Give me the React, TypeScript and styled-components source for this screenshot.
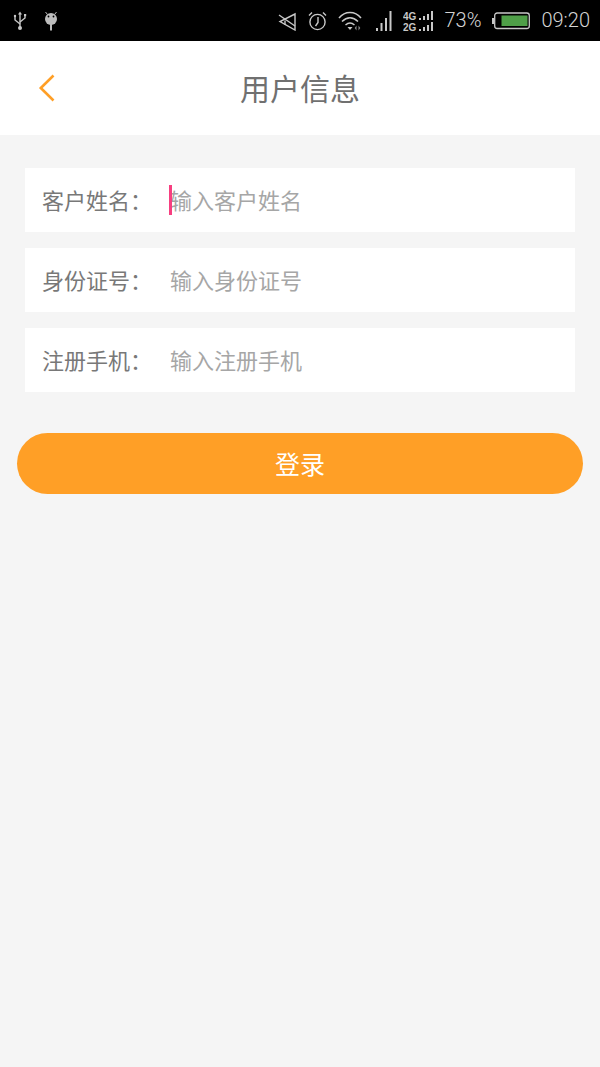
import React from "react";
import styled, { createGlobalStyle } from "styled-components";

const Global = createGlobalStyle`
  html, body { margin: 0; padding: 0; background: #f5f5f5; }
  * { box-sizing: border-box; }
`;

const Page = styled.div`
  width: 600px;
  height: 1067px;
  overflow: hidden;
  background: #f5f5f5;
  font-family: "Noto Sans CJK SC", "Noto Sans", sans-serif;
  display: flex;
  flex-direction: column;
`;

const StatusBar = styled.div`
  height: 41px;
  background: #000;
  display: flex;
  align-items: center;
  justify-content: space-between;
  padding: 0 10px 0 12px;
  color: #c8c8c8;
`;

const StatusGroup = styled.div<{ $gap: number }>`
  display: flex;
  align-items: center;
  gap: ${(p) => p.$gap}px;
`;

const StatusText = styled.span`
  font-family: Roboto, "Open Sans", sans-serif;
  font-weight: 300;
  font-size: 20px;
  line-height: 41px;
  color: #d4d4d4;
`;

const Header = styled.header`
  height: 94px;
  background: #fff;
  display: flex;
  align-items: center;
  justify-content: center;
  position: relative;
  padding-bottom: 2px;
`;

const BackButton = styled.button`
  position: absolute;
  left: 38px;
  top: 33px;
  width: 18px;
  height: 28px;
  padding: 0;
  border: 0;
  background: none;
  display: block;
`;

const Title = styled.h1`
  margin: 0;
  font-size: 30px;
  line-height: 40px;
  font-weight: 400;
  color: #707070;
`;

const Form = styled.form`
  display: flex;
  flex-direction: column;
  gap: 16px;
  padding: 33px 25px 0;
`;

const Row = styled.label`
  height: 64px;
  background: #fff;
  display: flex;
  align-items: center;
  padding: 0 0 2px 17px;
  position: relative;
`;

const Label = styled.span`
  width: 128px;
  flex: none;
  font-size: 22px;
  color: #787878;
  white-space: nowrap;
`;

const Placeholder = styled.span`
  font-size: 22px;
  color: #a6a6a6;
  white-space: nowrap;
`;

const Caret = styled.i`
  position: absolute;
  left: 144px;
  top: 17px;
  width: 3px;
  height: 30px;
  background: #f73f80;
`;

const Submit = styled.button`
  display: block;
  margin: 41px 17px 0;
  width: 566px;
  height: 61px;
  border: 0;
  border-radius: 30.5px;
  background: #ff9f26;
  color: #fff;
  font-family: inherit;
  font-size: 25px;
  line-height: 61px;
  padding: 0;
`;

const UsbIcon = () => (
  <svg width="16" height="20" viewBox="0 0 16 20" fill="none" stroke="#c8c8c8" strokeWidth="1.4">
    <path d="M8 3v13" />
    <path d="M8 0.5 6 3.5h4z" fill="#c8c8c8" stroke="none" />
    <circle cx="8" cy="17" r="2" fill="#c8c8c8" stroke="none" />
    <path d="M3 5v4l5 4M13 4v3l-5 4" />
    <circle cx="3" cy="5" r="1.2" fill="#c8c8c8" stroke="none" />
    <rect x="12" y="3" width="2.2" height="2.2" fill="#c8c8c8" stroke="none" />
  </svg>
);

const BugIcon = () => (
  <svg width="14" height="20" viewBox="0 0 14 20" fill="#bdbdbd">
    <path d="M1.5 1 3.5 3.5M12.5 1 10.5 3.5" stroke="#bdbdbd" strokeWidth="1" />
    <circle cx="7" cy="8" r="6" />
    <rect x="6" y="13" width="2" height="6.5" />
    <circle cx="4.5" cy="5.5" r="0.9" fill="#000" />
    <circle cx="9.5" cy="5.5" r="0.9" fill="#000" />
  </svg>
);

const MuteIcon = () => (
  <svg width="19" height="20" viewBox="0 0 19 20" fill="none" stroke="#c8c8c8" strokeWidth="1.4">
    <path d="M17 3 2 10.5 17 19z" />
    <path d="M7 9.5v4.5" />
    <path d="M1 4 17 15" />
  </svg>
);

const AlarmIcon = () => (
  <svg width="19" height="20" viewBox="0 0 19 20" fill="none" stroke="#c8c8c8" strokeWidth="1.4">
    <circle cx="9.5" cy="11" r="7.6" />
    <path d="M10 6v5.5L7.5 15" />
    <path d="M1 4.5 4 1.5M18 4.5 15 1.5" />
  </svg>
);

const WifiIcon = () => (
  <svg width="27" height="20" viewBox="0 0 27 20" fill="none" stroke="#c8c8c8" strokeWidth="1.5">
    <path d="M1 7C7-.5 17-.5 23 7" />
    <path d="M4 10.5c5-5 11-5 16 0" />
    <path d="M7.5 14c3-2.6 6-2.6 9 0" />
    <path d="M9.5 16h5l-2.5 3z" fill="#c8c8c8" stroke="none" />
    <path d="M18.5 14.5v5l-1.8-2.5zM20.5 14.5v5l1.8-2.5z" fill="#8a8a8a" stroke="none" />
  </svg>
);

const SignalIcon = () => (
  <svg width="16" height="20" viewBox="0 0 16 20" fill="#c8c8c8">
    <rect x="0" y="17" width="2" height="3" />
    <rect x="4.5" y="12" width="2" height="8" />
    <rect x="9" y="7" width="2" height="13" />
    <rect x="13.5" y="0" width="2" height="20" />
  </svg>
);

const NetIcon = () => (
  <svg width="30" height="22" viewBox="0 0 30 22" fill="#c8c8c8">
    <text x="0" y="9.5" fontFamily="Liberation Sans" fontWeight="700" fontSize="10">4G</text>
    <text x="0" y="20.5" fontFamily="Liberation Sans" fontWeight="700" fontSize="10">2G</text>
    <rect x="16" y="8" width="2" height="2" />
    <rect x="20" y="6" width="2" height="4" />
    <rect x="24" y="4" width="2" height="6" />
    <rect x="28" y="1" width="2" height="9" />
    <rect x="16" y="19" width="2" height="2" />
    <rect x="20" y="17" width="2" height="4" />
    <rect x="24" y="15" width="2" height="6" />
    <rect x="28" y="12" width="2" height="9" />
  </svg>
);

const BatteryIcon = () => (
  <svg width="38" height="18" viewBox="0 0 38 18" fill="none">
    <rect x="0" y="6" width="2" height="6" fill="#c8c8c8" />
    <rect x="2.7" y="1" width="34.6" height="15.5" rx="2.5" stroke="#c8c8c8" strokeWidth="1.3" />
    <rect x="9.5" y="3.5" width="26" height="10.5" fill="#4f9f48" />
  </svg>
);

const BackIcon = () => (
  <svg width="18" height="28" viewBox="0 0 18 28" fill="none" stroke="#ff9f26" strokeWidth="2.6">
    <path d="M15.5 1.5 2.8 14l12.7 12.5" />
  </svg>
);

const fields = [
  { label: "客户姓名：", placeholder: "输入客户姓名", focused: true },
  { label: "身份证号：", placeholder: "输入身份证号", focused: false },
  { label: "注册手机：", placeholder: "输入注册手机", focused: false },
];

export default function App() {
  return (
    <Page>
      <Global />
      <StatusBar>
        <StatusGroup $gap={16}>
          <UsbIcon />
          <BugIcon />
        </StatusGroup>
        <StatusGroup $gap={11}>
          <MuteIcon />
          <AlarmIcon />
          <WifiIcon />
          <SignalIcon />
          <NetIcon />
          <StatusText>73%</StatusText>
          <BatteryIcon />
          <StatusText>09:20</StatusText>
        </StatusGroup>
      </StatusBar>
      <Header>
        <BackButton type="button">
          <BackIcon />
        </BackButton>
        <Title>用户信息</Title>
      </Header>
      <Form>
        {fields.map((f) => (
          <Row key={f.label}>
            <Label>{f.label}</Label>
            <Placeholder>{f.placeholder}</Placeholder>
            {f.focused && <Caret />}
          </Row>
        ))}
      </Form>
      <Submit type="button">登录</Submit>
    </Page>
  );
}
